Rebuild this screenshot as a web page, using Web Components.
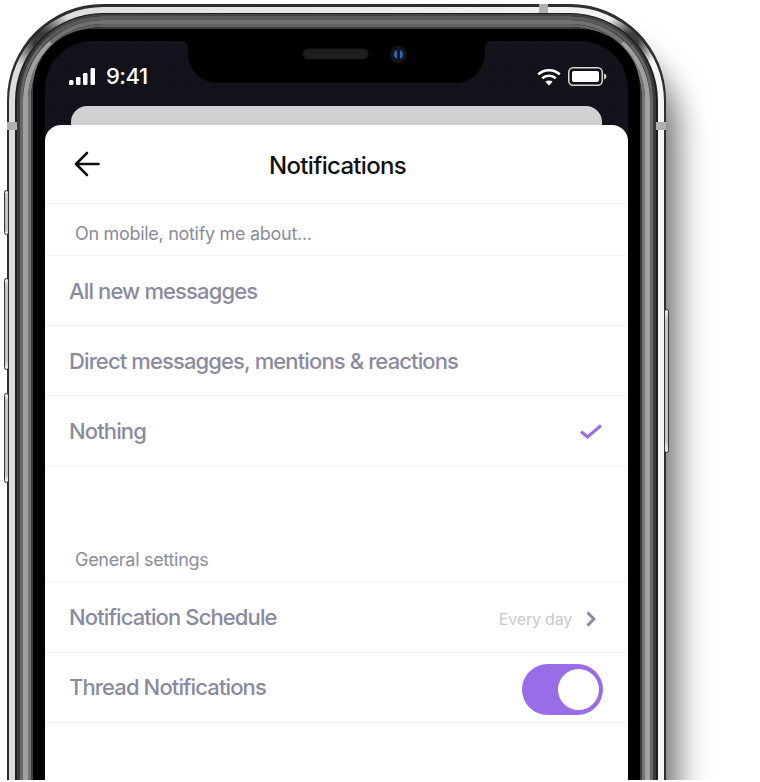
<!DOCTYPE html>
<html>
<head>
<meta charset="utf-8">
<title>Notifications</title>
<style>
    html, body { margin: 0; background: #fff; overflow: hidden; }
    body { width: 760px; height: 780px; font-family: Inter, "Liberation Sans", sans-serif; }
</style>
</head>
<body>
<phone-frame>
    <status-bar time="9:41"></status-bar>
    <notification-sheet>
        <sheet-header title="Notifications"></sheet-header>
        <section-label>On mobile, notify me about...</section-label>
        <setting-row>All new messagges</setting-row>
        <setting-row>Direct messagges, mentions &amp; reactions</setting-row>
        <setting-row>Nothing<check-mark slot="end"></check-mark></setting-row>
        <section-label gap>General settings</section-label>
        <setting-row raised>Notification Schedule<row-value slot="end">Every day</row-value></setting-row>
        <setting-row raised>Thread Notifications<toggle-switch slot="end" on></toggle-switch></setting-row>
    </notification-sheet>
</phone-frame>

<script>
// the metal body of the phone, one nested ring for each band of the bezel
class PhoneFrame extends HTMLElement {
    constructor() {
        super();
        this.attachShadow({ mode: 'open' });
        this.shadowRoot.innerHTML = `
            <style>
                :host { display: block; width: 760px; height: 780px; overflow: hidden; padding: 4px 0 0 7px; box-sizing: border-box; }
                .body { position: relative; width: 659px; height: 900px; }
                .ring { box-sizing: border-box; height: 100%; border-style: solid; background: #000; }
                .r1 { border-color: #2e2e2e; border-width: 3px 2px; border-radius: 96px; box-shadow: 25px 30px 32px -15px rgba(0,0,0,.6); }
                .r2 { border-color: transparent; border-width: 6px; border-radius: 94px; background-clip: border-box;
                      background-image:
                        radial-gradient(circle 34px at 34px 34px, rgba(40,40,40,.9) 25%, rgba(40,40,40,0) 100%),
                        radial-gradient(circle 30px at calc(100% - 34px) 34px, rgba(40,40,40,.9) 25%, rgba(40,40,40,0) 100%),
                        linear-gradient(90deg, #dcdcdc, #f4f4f4);
                      background-origin: border-box; }
                .r3 { border-color: #1e1e1e; border-width: 1px 2px; border-radius: 88px; }
                .a { border-color: #444 #3a3a3a; border-width: 2px 3px; border-radius: 86px; }
                .b { border-color: #5a5a5a #676767; border-width: 4px 3px; border-radius: 83px; }
                .c { border-color: #727272 #a0a0a0; border-width: 4px 5px; border-radius: 80px; }
                .d { border-color: #636363 #757575; border-width: 3px 3px; border-radius: 75px; }
                .e { border-color: #3a3a3a; border-width: 2px; border-radius: 72px; }
                .r7 { border-color: #000; border-width: 12px; border-radius: 60px; }
                .screen { height: 100%; border-radius: 48px; overflow: hidden; background: #12121a radial-gradient(#18181f .6px, transparent .8px) 0 0 / 5px 5px; }
                .button { position: absolute; background: linear-gradient(#f2f2f2, #c4c4c4 8%, #c4c4c4 92%, #f2f2f2); border: 1px solid #333; box-sizing: border-box; border-radius: 3px; }
                .band { position: absolute; background: #b0b0b0; }
            </style>
            <div class="body">
                <div class="ring r1"><div class="ring r2"><div class="ring r3"><div class="ring a"><div class="ring b"><div class="ring c"><div class="ring d"><div class="ring e"><div class="ring r7">
                    <div class="screen"><slot></slot></div>
                </div></div></div></div></div></div></div></div></div>
                <i class="button" style="left:-3px;top:186px;width:5px;height:45px"></i>
                <i class="button" style="left:-3px;top:274px;width:5px;height:92px"></i>
                <i class="button" style="left:-3px;top:389px;width:5px;height:90px"></i>
                <i class="button" style="right:-3px;top:305px;width:5px;height:144px"></i>
                <i class="band" style="left:0;top:118px;width:10px;height:8px"></i>
                <i class="band" style="right:0;top:118px;width:10px;height:8px"></i>
                <i class="band" style="left:532px;top:0;width:9px;height:9px"></i>
            </div>
        `;
    }
}

// time, signal, notch with speaker and camera, wifi and battery
class StatusBar extends HTMLElement {
    constructor() {
        super();
        this.attachShadow({ mode: 'open' });
        this.shadowRoot.innerHTML = `
            <style>
                :host { display: flex; height: 65px; color: #fff; font-size: 22px; font-weight: 500; letter-spacing: -.5px; }
                .left { width: 143px; display: flex; align-items: center; gap: 10px; padding: 5px 0 0 24px; box-sizing: border-box; }
                .notch { position: relative; width: 297px; height: 42px; background: #000; border-radius: 0 0 30px 30px; display: flex; align-items: center; justify-content: center; gap: 21px; padding: 0 0 16px 36px; box-sizing: border-box; }
                .notch::before, .notch::after { content: ''; position: absolute; top: 0; width: 7px; height: 7px; }
                .notch::before { left: -7px; background: radial-gradient(circle at 0 100%, transparent 7px, #000 7.5px); }
                .notch::after { right: -7px; background: radial-gradient(circle at 100% 100%, transparent 7px, #000 7.5px); }
                .speaker { width: 67px; height: 12px; border-radius: 6px; background: #1d1d1f; border: 1px solid #0a0a0a; box-sizing: border-box; }
                .camera { width: 17px; height: 17px; border-radius: 50%; background: #14141a; display: flex; align-items: center; justify-content: center; }
                .camera i { width: 9px; height: 9px; border-radius: 50%; background: linear-gradient(90deg, #2f67b5 0 38%, #0a1526 38% 62%, #2f67b5 62%); }
                .right { flex: 1; display: flex; align-items: center; gap: 7px; padding: 6px 0 0 52px; box-sizing: border-box; }
                svg { display: block; }
            </style>
            <div class="left">
                <svg width="27" height="17" viewBox="0 0 27 17" fill="#fff">
                    <rect x="0" y="12" width="4.5" height="5" rx="1.5"/>
                    <rect x="7" y="9" width="4.500" height="8" rx="1.2"/>
                    <rect x="14" y="5" width="4.500" height="12" rx="1.2"/>
                    <rect x="21.500" y="0" width="4.500" height="17" rx="1.2"/>
                </svg>
                <span class="time"></span>
            </div>
            <div class="notch"><div class="speaker"></div><div class="camera"><i></i></div></div>
            <div class="right">
                <svg width="24" height="18" viewBox="0 0 24 18" fill="none" stroke="#fff" stroke-width="2.6">
                    <path d="M1.2 6.4C7.2 .9 16.8 .9 22.8 6.4"/>
                    <path d="M5.2 10.3C9 6.9 15 6.9 18.8 10.3"/>
                    <path d="M12 17.6l-3.6-3.9c2-1.7 5.2-1.7 7.2 0z" fill="#fff" stroke="none"/>
                </svg>
                <svg width="39" height="19" viewBox="0 0 39 19" fill="none">
                    <rect x=".75" y=".75" width="33.5" height="17.5" rx="4.5" stroke="#d8d8d8" stroke-width="1.5"/>
                    <rect x="4" y="4" width="27" height="11" rx="2" fill="#fff"/>
                    <path d="M36 6.5c1.6.4 2.4 1.6 2.4 3s-.8 2.6-2.4 3z" fill="#cfcfcf"/>
                </svg>
            </div>
        `;
        this.shadowRoot.querySelector('.time').textContent = this.getAttribute('time');
    }
}

// the white sheet and the grey card peeking out behind it
class NotificationSheet extends HTMLElement {
    constructor() {
        super();
        this.attachShadow({ mode: 'open' });
        this.shadowRoot.innerHTML = `
            <style>
                :host { display: block; }
                .behind { height: 19px; margin: 0 26px; background: #d1d1d4; border-radius: 16px 16px 0 0; }
                .sheet { background: #fff; border-radius: 16px 16px 0 0; height: 800px; }
            </style>
            <div class="behind"></div>
            <div class="sheet"><slot></slot></div>
        `;
    }
}

class SheetHeader extends HTMLElement {
    constructor() {
        super();
        this.attachShadow({ mode: 'open' });
        this.shadowRoot.innerHTML = `
            <style>
                :host { position: relative; display: flex; align-items: center; justify-content: center; height: 76px; padding: 2px 0 0 2px; border-bottom: 1px solid #f4f4f6; color: #111; font-size: 24px; font-weight: 500; letter-spacing: -.7px; }
                button { position: absolute; left: 29px; top: 26px; padding: 0; border: 0; background: none; display: block; }
                svg { display: block; }
            </style>
            <button>
                <svg width="26" height="26" viewBox="0 0 26 26" fill="none" stroke="#111" stroke-width="2.6" stroke-linecap="round" stroke-linejoin="round">
                    <path d="M24.5 13H2M13 2 2 13l11 11"/>
                </svg>
            </button>
            <span class="title"></span>
        `;
        this.shadowRoot.querySelector('.title').textContent = this.getAttribute('title');
    }
}

class SectionLabel extends HTMLElement {
    constructor() {
        super();
        this.attachShadow({ mode: 'open' });
        this.shadowRoot.innerHTML = `
            <style>
                :host { display: flex; align-items: center; box-sizing: border-box; height: 52px; padding: 7px 0 0 30px; border-bottom: 1px solid #f4f4f6; color: #8b8b9b; font-size: 18px; letter-spacing: -.3px; }
                :host([gap]) { height: 54px; margin-top: 63px; }
            </style>
            <slot></slot>
        `;
    }
}

class SettingRow extends HTMLElement {
    constructor() {
        super();
        this.attachShadow({ mode: 'open' });
        this.shadowRoot.innerHTML = `
            <style>
                :host { display: flex; align-items: center; justify-content: space-between; height: 69px; padding: 0 24px; border-bottom: 1px solid #f4f4f6; color: #8a8a9e; font-size: 22px; font-weight: 500; letter-spacing: -.88px; }
                :host([raised]) { height: 67px; padding-bottom: 2px; }
            </style>
            <span><slot></slot></span>
            <slot name="end"></slot>
        `;
    }
}

class CheckMark extends HTMLElement {
    constructor() {
        super();
        this.attachShadow({ mode: 'open' });
        this.shadowRoot.innerHTML = `
            <style>:host { display: block; margin: 2px 2px 0 0; } svg { display: block; }</style>
            <svg width="22" height="15" viewBox="0 0 22 15" fill="none" stroke="#9b6ce8" stroke-width="3">
                <path d="M1 7.500 7.500 13 21 1.500"/>
            </svg>
        `;
    }
}

class RowValue extends HTMLElement {
    constructor() {
        super();
        this.attachShadow({ mode: 'open' });
        this.shadowRoot.innerHTML = `
            <style>
                :host { display: flex; align-items: center; gap: 14px; margin: 5px 8px 0 0; color: #c8c8ce; font-size: 16px; font-weight: 400; letter-spacing: -.2px; }
                svg { display: block; }
            </style>
            <slot></slot>
            <svg width="10" height="16" viewBox="0 0 10 16" fill="none" stroke="#8a8a9e" stroke-width="3">
                <path d="M1.500 1.500 8 8l-6.500 6.500"/>
            </svg>
        `;
    }
}

// on/off switch, click flips the on attribute
class ToggleSwitch extends HTMLElement {
    constructor() {
        super();
        this.attachShadow({ mode: 'open' });
        this.shadowRoot.innerHTML = `
            <style>
                :host { display: flex; align-items: center; box-sizing: border-box; width: 81px; height: 51px; margin: 6px 1px 0 0; padding: 5px 4px; border-radius: 26px; background: #c8c8ce; cursor: pointer; }
                :host([on]) { background: #9b6ce8; justify-content: flex-end; }
                i { width: 41px; height: 41px; border-radius: 50%; background: #fff; }
            </style>
            <i></i>
        `;
        this.addEventListener('click', () => this.toggleAttribute('on'));
    }
}

customElements.define('phone-frame', PhoneFrame);
customElements.define('status-bar', StatusBar);
customElements.define('notification-sheet', NotificationSheet);
customElements.define('sheet-header', SheetHeader);
customElements.define('section-label', SectionLabel);
customElements.define('setting-row', SettingRow);
customElements.define('check-mark', CheckMark);
customElements.define('row-value', RowValue);
customElements.define('toggle-switch', ToggleSwitch);
</script>
</body>
</html>
